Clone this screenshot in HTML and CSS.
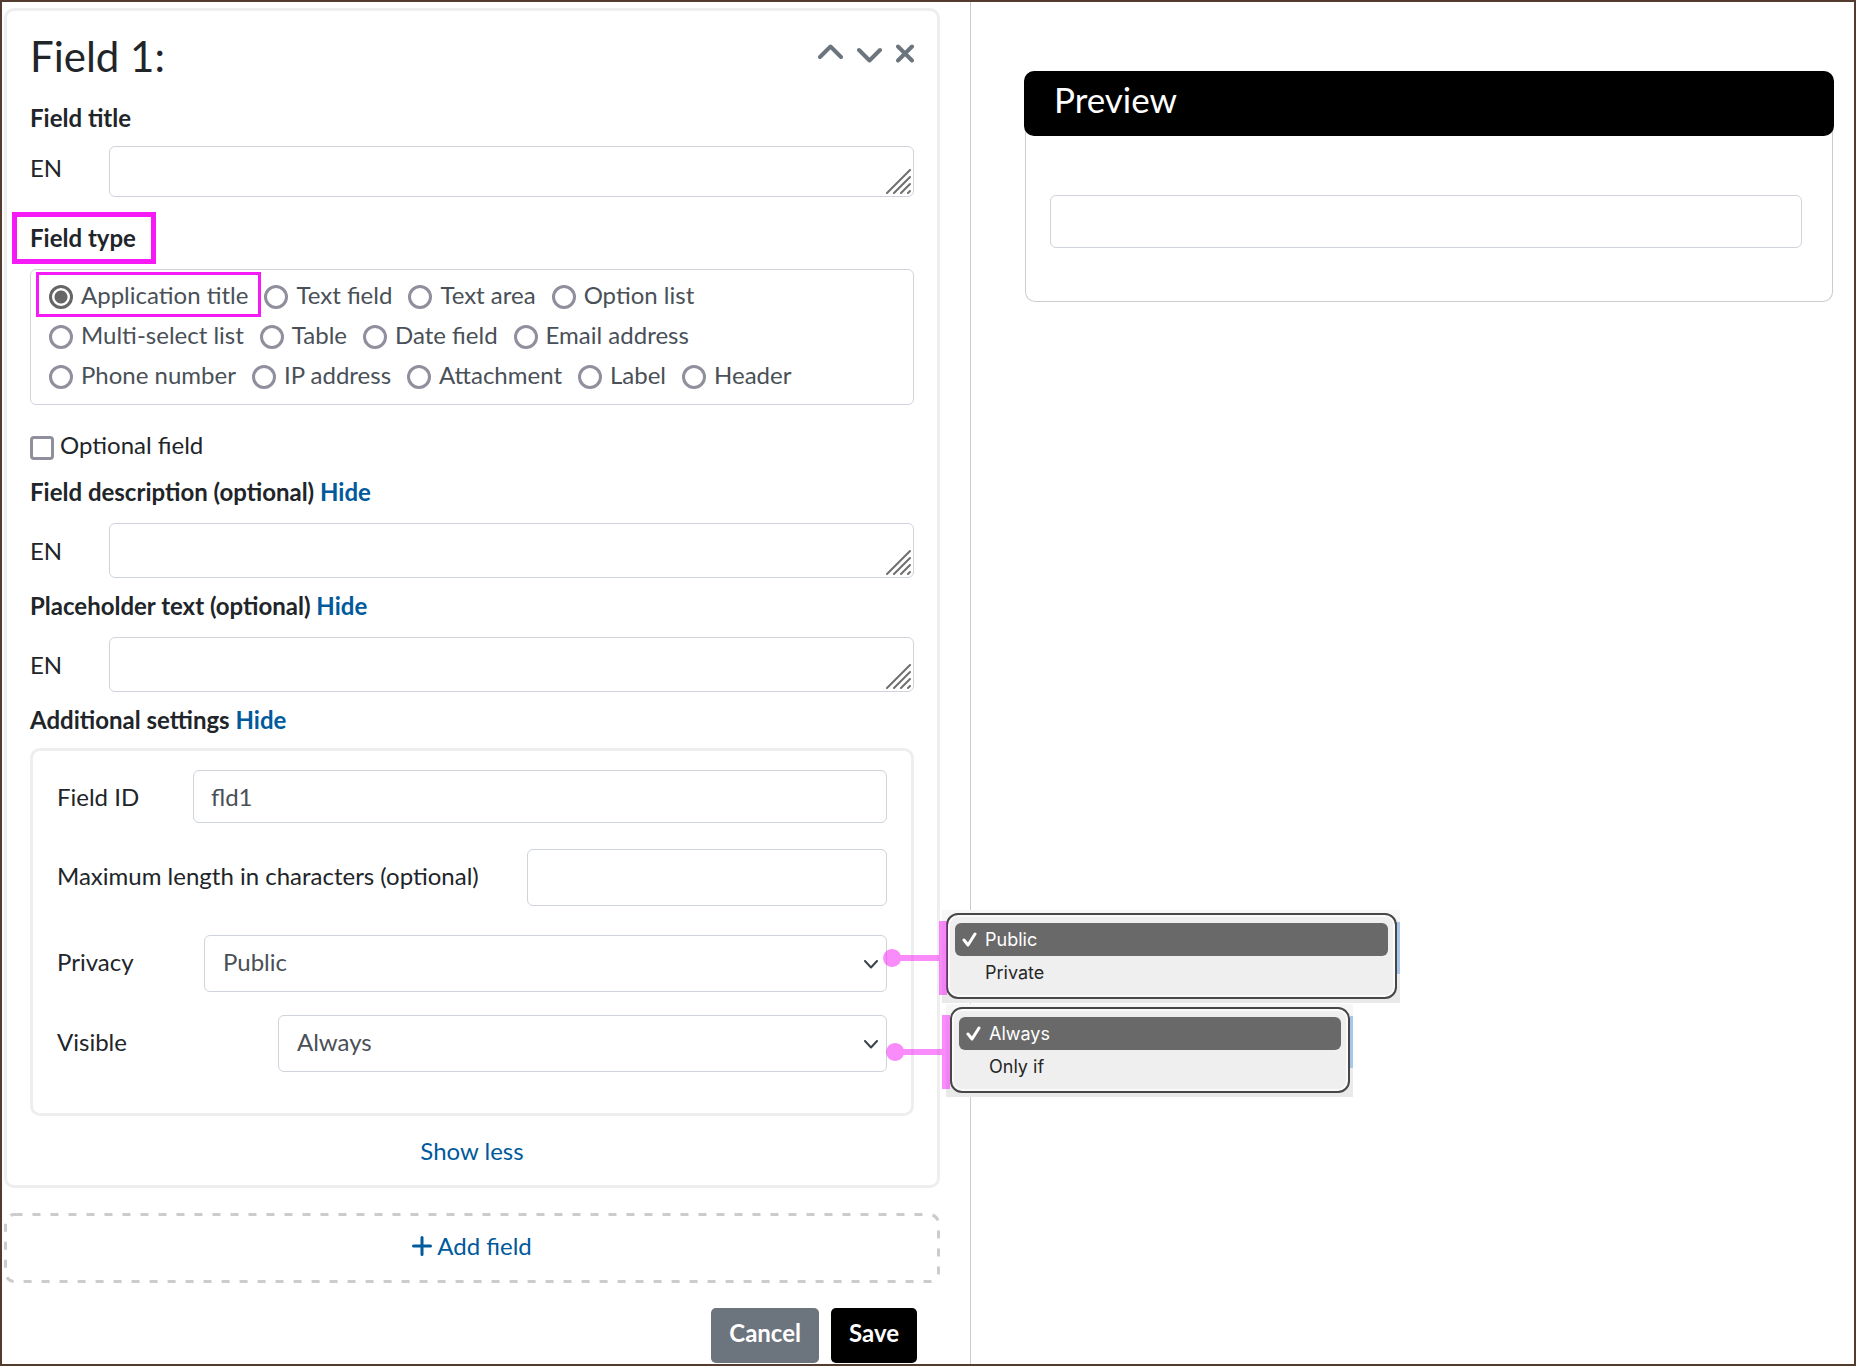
FILE: index.html
```html
<!DOCTYPE html>
<html lang="en">
<head>
<meta charset="utf-8">
<title>Form editor</title>
<link rel="stylesheet" href="styles.css">
</head>
<body>
<div class="page">
  <main class="editor">
    <section class="card">
      <header class="card-header">
        <h1 class="card-title">Field 1:</h1>
        <div class="card-tools">
          <button class="icon-button" type="button" aria-label="Move up"><svg width="25" height="20" viewBox="0 0 25 20"><path d="M2 13 12.500 2.500 23 13"/></svg></button>
          <button class="icon-button" type="button" aria-label="Move down"><svg width="25" height="20" viewBox="0 0 25 20"><path d="M2 6 12.500 16.500 23 6"/></svg></button>
          <button class="icon-button" type="button" aria-label="Remove"><svg width="18" height="20" viewBox="0 0 18 20"><path d="M2 2.500 16 16.500M16 2.500 2 16.500"/></svg></button>
        </div>
      </header>

      <h2 class="heading">Field title</h2>
      <div class="lang-row lang-row-compact">
        <label class="lang" for="title-en">EN</label>
        <div class="area-wrap">
          <textarea class="control area" id="title-en"></textarea>
          <svg class="grip" viewBox="0 0 25 25"><path d="M1 24 24 1M8 24 24 8M15 24 24 15M22 24 24 22"/></svg>
        </div>
      </div>

      <h2 class="heading type-heading"><span class="marked">Field type</span></h2>
      <div class="types" role="radiogroup" aria-label="Field type">
        <label class="type marked"><input type="radio" name="type" checked>Application title</label>
        <label class="type"><input type="radio" name="type">Text field</label>
        <label class="type"><input type="radio" name="type">Text area</label>
        <label class="type"><input type="radio" name="type">Option list</label>
        <label class="type"><input type="radio" name="type">Multi-select list</label>
        <label class="type"><input type="radio" name="type">Table</label>
        <label class="type"><input type="radio" name="type">Date field</label>
        <label class="type"><input type="radio" name="type">Email address</label>
        <label class="type"><input type="radio" name="type">Phone number</label>
        <label class="type"><input type="radio" name="type">IP address</label>
        <label class="type"><input type="radio" name="type">Attachment</label>
        <label class="type"><input type="radio" name="type">Label</label>
        <label class="type"><input type="radio" name="type">Header</label>
      </div>

      <label class="optional"><input type="checkbox">Optional field</label>

      <h2 class="heading">Field description (optional) <a class="link" href="#">Hide</a></h2>
      <div class="lang-row">
        <label class="lang" for="desc-en">EN</label>
        <div class="area-wrap">
          <textarea class="control area" id="desc-en"></textarea>
          <svg class="grip" viewBox="0 0 25 25"><path d="M1 24 24 1M8 24 24 8M15 24 24 15M22 24 24 22"/></svg>
        </div>
      </div>

      <h2 class="heading">Placeholder text (optional) <a class="link" href="#">Hide</a></h2>
      <div class="lang-row">
        <label class="lang" for="placeholder-en">EN</label>
        <div class="area-wrap">
          <textarea class="control area" id="placeholder-en"></textarea>
          <svg class="grip" viewBox="0 0 25 25"><path d="M1 24 24 1M8 24 24 8M15 24 24 15M22 24 24 22"/></svg>
        </div>
      </div>

      <h2 class="heading">Additional settings <a class="link" href="#">Hide</a></h2>
      <div class="settings">
        <div class="setting setting-id">
          <label for="field-id">Field ID</label>
          <input class="control" id="field-id" type="text" value="fld1">
        </div>
        <div class="setting setting-length">
          <label for="max-length">Maximum length in characters (optional)</label>
          <input class="control" id="max-length" type="text">
        </div>
        <div class="setting setting-privacy">
          <label for="privacy">Privacy</label>
          <div class="select-wrap">
            <select class="control" id="privacy"><option>Public</option><option>Private</option></select>
            <svg class="caret" viewBox="0 0 14 9"><path d="M1 1 7 7.500 13 1"/></svg>
          </div>
          <div class="callout">
            <div class="menu-shot">
              <ul class="menu">
                <li class="menu-item selected"><svg class="check" viewBox="0 0 15 15"><path d="M2 8 6 13 13 2"/></svg>Public</li>
                <li class="menu-item">Private</li>
              </ul>
            </div>
            <svg class="pointer" viewBox="0 0 64 76"><path d="M56 1h8v74h-8V41H17.600a9 9 0 1 1 0-6H56z"/></svg>
          </div>
        </div>
        <div class="setting setting-visible">
          <label for="visible">Visible</label>
          <div class="select-wrap">
            <select class="control" id="visible"><option>Always</option><option>Only if</option></select>
            <svg class="caret" viewBox="0 0 14 9"><path d="M1 1 7 7.500 13 1"/></svg>
          </div>
          <div class="callout">
            <div class="menu-shot">
              <ul class="menu">
                <li class="menu-item selected"><svg class="check" viewBox="0 0 15 15"><path d="M2 8 6 13 13 2"/></svg>Always</li>
                <li class="menu-item">Only if</li>
              </ul>
            </div>
            <svg class="pointer" viewBox="0 0 64 76"><path d="M56 1h8v74h-8V41H17.600a9 9 0 1 1 0-6H56z"/></svg>
          </div>
        </div>
      </div>

      <div class="toggle"><a class="link" href="#">Show less</a></div>
    </section>

    <div class="add-field">
      <svg class="dashes" aria-hidden="true"><rect x="1.500" y="1.500" rx="9"/></svg>
      <a class="link add-link" href="#"><svg width="20" height="20" viewBox="0 0 20 20"><path d="M10 1.500V18.500M1.500 10H18.500"/></svg>Add field</a>
    </div>

    <div class="actions">
      <button class="button button-cancel" type="button">Cancel</button>
      <button class="button button-save" type="submit">Save</button>
    </div>
  </main>

  <aside class="preview">
    <section class="preview-card">
      <h2 class="preview-title">Preview</h2>
      <input class="control preview-input" type="text" aria-label="Application title">
    </section>
  </aside>
</div>
</body>
</html>
```
FILE: styles.css
```css
* {
  box-sizing: border-box;
}

body {
  margin: 0;
  background: #fff;
  color: #212529;
  font: 24px/36px Lato, "Liberation Sans", sans-serif;
}

h1,
h2,
ul {
  margin: 0;
  padding: 0;
}

svg {
  display: block;
  fill: none;
  stroke-linecap: round;
  stroke-linejoin: round;
}

.page {
  display: grid;
  grid-template-columns: 969fr 883fr;
  min-height: 100vh;
  border: 2px solid #533b2f;
}

.editor {
  padding: 6px 30px 0 2px;
  border-right: 1px solid #ccc;
}

.card {
  padding: 20px 23px 16px;
  border: 3px solid #eee;
  border-radius: 10px;
}

.card-header {
  display: flex;
  justify-content: space-between;
  align-items: flex-start;
  margin-bottom: 19px;
}

.card-title {
  font-size: 42px;
  font-weight: 400;
  line-height: 50px;
}

.card-tools {
  display: flex;
  gap: 14px;
  padding-top: 13px;
}

.icon-button {
  padding: 0;
  border: 0;
  background: none;
}

.icon-button svg {
  stroke: #6c757d;
  stroke-width: 4;
}

.heading {
  font-size: 24px;
  font-weight: 700;
}

.link {
  color: #005a9c;
  text-decoration: none;
}

.control {
  width: 100%;
  padding: 0 17px;
  border: 1px solid #ced4da;
  border-radius: 6px;
  background: #fff;
  color: #495057;
  font: inherit;
}

.lang-row {
  display: flex;
  align-items: center;
  margin: 13px 0 10px;
}

.lang {
  flex: 0 0 79px;
}

.area-wrap {
  position: relative;
  flex: 1;
}

.area {
  display: block;
  height: 55px;
  resize: none;
}

.lang-row-compact {
  align-items: flex-start;
  margin: 10px 0 23px;
}

.lang-row-compact .lang {
  padding-top: 4px;
}

.lang-row-compact .area {
  height: 51px;
}

.grip {
  position: absolute;
  right: 3px;
  bottom: 3px;
  width: 25px;
  height: 25px;
  stroke: #6f6f6f;
  stroke-width: 2;
}

.marked {
  position: relative;
}

.marked::after {
  content: "";
  position: absolute;
  inset: -5px -13px -4px -13px;
  border: 3px solid #f61af6;
}

.type-heading {
  display: flex;
}

.type-heading .marked::after {
  inset: -8px -20px -8px -18px;
  border: 5px solid #f61af6;
}

.types {
  display: flex;
  flex-wrap: wrap;
  margin: 13px 0 22px;
  padding: 7px 18px;
  border: 1px solid #ced4da;
  border-radius: 6px;
}

.type {
  display: flex;
  align-items: flex-start;
  gap: 8px;
  margin: 0 16px 4px 0;
  color: #495057;
}

.type input,
.optional input {
  appearance: none;
  width: 24px;
  height: 24px;
  margin: 8px 0 0;
  border: 3px solid #8f8f9d;
  border-radius: 50%;
  background: #fff;
}

.type input:checked {
  border-color: #666;
  background: radial-gradient(#666 6px, #fff 7px);
}

.optional {
  display: flex;
  align-items: flex-start;
  gap: 6px;
  margin-bottom: 11px;
}

.optional input {
  margin-top: 9px;
  border-radius: 4px;
}

.settings {
  display: grid;
  margin-top: 10px;
  padding: 19px 24px 41px;
  border: 3px solid #eee;
  border-radius: 10px;
}

.setting {
  position: relative;
  display: flex;
  align-items: center;
}

.setting label {
  flex: 0 0 auto;
  padding-bottom: 4px;
}

.setting .control {
  height: 57px;
}

.setting-id {
  margin-bottom: 26px;
}

.setting-id label {
  width: 136px;
  padding: 0;
}

.setting-id .control {
  height: 53px;
}

.setting-length {
  margin-bottom: 29px;
}

.setting-length label {
  width: 470px;
}

.setting-privacy {
  margin-bottom: 23px;
}

.setting-privacy label {
  width: 147px;
}

.setting-visible label {
  width: 221px;
}

.select-wrap {
  position: relative;
  flex: 1;
}

.select-wrap .control {
  display: block;
  padding: 0 18px 4px;
  appearance: none;
}

.caret {
  position: absolute;
  right: 9px;
  top: 25px;
  width: 14px;
  height: 9px;
  stroke: #3c444c;
  stroke-width: 2;
}

/* The open menus are pinned to the right end of their own select. */
.callout {
  position: absolute;
  left: 100%;
  top: -25px;
  z-index: 1;
}

.menu-shot {
  width: 458px;
  margin-left: 55px;
  padding: 3px 3px 4px 4px;
  background: linear-gradient(#a6c6ec, #a6c6ec) right 12px / 3px 52px no-repeat, linear-gradient(#f7f7f7, #e9e9e9);
}

.menu {
  height: 86px;
  padding: 8px 7px;
  border: 2px solid #474747;
  border-radius: 12px;
  background: #efefef;
  box-shadow: inset 0 0 0 2px #fafafa;
  color: #262626;
  font: 18px/33px Inter, "Liberation Sans", sans-serif;
  list-style: none;
}

.menu-item {
  padding-left: 30px;
}

.menu-item.selected {
  position: relative;
  border-radius: 6px;
  background: #696969;
  color: #fff;
}

.check {
  position: absolute;
  left: 7px;
  top: 9px;
  width: 15px;
  height: 15px;
  stroke: #fff;
  stroke-width: 3;
}

.pointer {
  position: absolute;
  left: -4px;
  top: 10px;
  width: 64px;
  height: 76px;
  fill: #f61af6;
  opacity: 0.500;
}

.setting-visible .callout {
  top: -11px;
}

.setting-visible .menu-shot {
  width: 407px;
  margin-left: 59px;
}

.setting-visible .pointer {
  left: -1px;
}

.toggle {
  margin-top: 17px;
  text-align: center;
}

.add-field {
  position: relative;
  display: flex;
  justify-content: center;
  height: 70px;
  margin: 25px 0;
  padding-top: 15px;
}

.dashes {
  position: absolute;
  inset: 0;
  width: 100%;
  height: 100%;
}

.dashes rect {
  width: calc(100% - 3px);
  height: calc(100% - 3px);
  stroke: #ccc;
  stroke-width: 3;
  stroke-linecap: butt;
  stroke-dasharray: 8 10;
}

.add-link {
  position: relative;
  display: flex;
  align-items: flex-start;
  gap: 5px;
}

.add-link svg {
  margin-top: 8px;
  stroke: #005a9c;
  stroke-width: 3;
}

.actions {
  display: flex;
  justify-content: flex-end;
  gap: 12px;
  margin-bottom: 1px;
  padding-right: 23px;
}

.button {
  padding: 7px 18px 12px;
  border: 0;
  border-radius: 5px;
  color: #fff;
  font: 700 24px/36px Lato, "Liberation Sans", sans-serif;
}

.button-cancel {
  background: #6c757d;
}

.button-save {
  background: #000;
}

.preview {
  padding: 69px 21px 0 54px;
}

.preview-card {
  padding: 0 30px 53px 24px;
  border: 1px solid #ccc;
  border-top: 0;
  border-radius: 10px;
}

.preview-title {
  margin: 0 -32px 59px -26px;
  padding: 6px 30px 15px;
  border-radius: 10px;
  background: #000;
  color: #fff;
  font-size: 35px;
  font-weight: 400;
  line-height: 44px;
}

.preview-input {
  display: block;
  height: 53px;
}
```
